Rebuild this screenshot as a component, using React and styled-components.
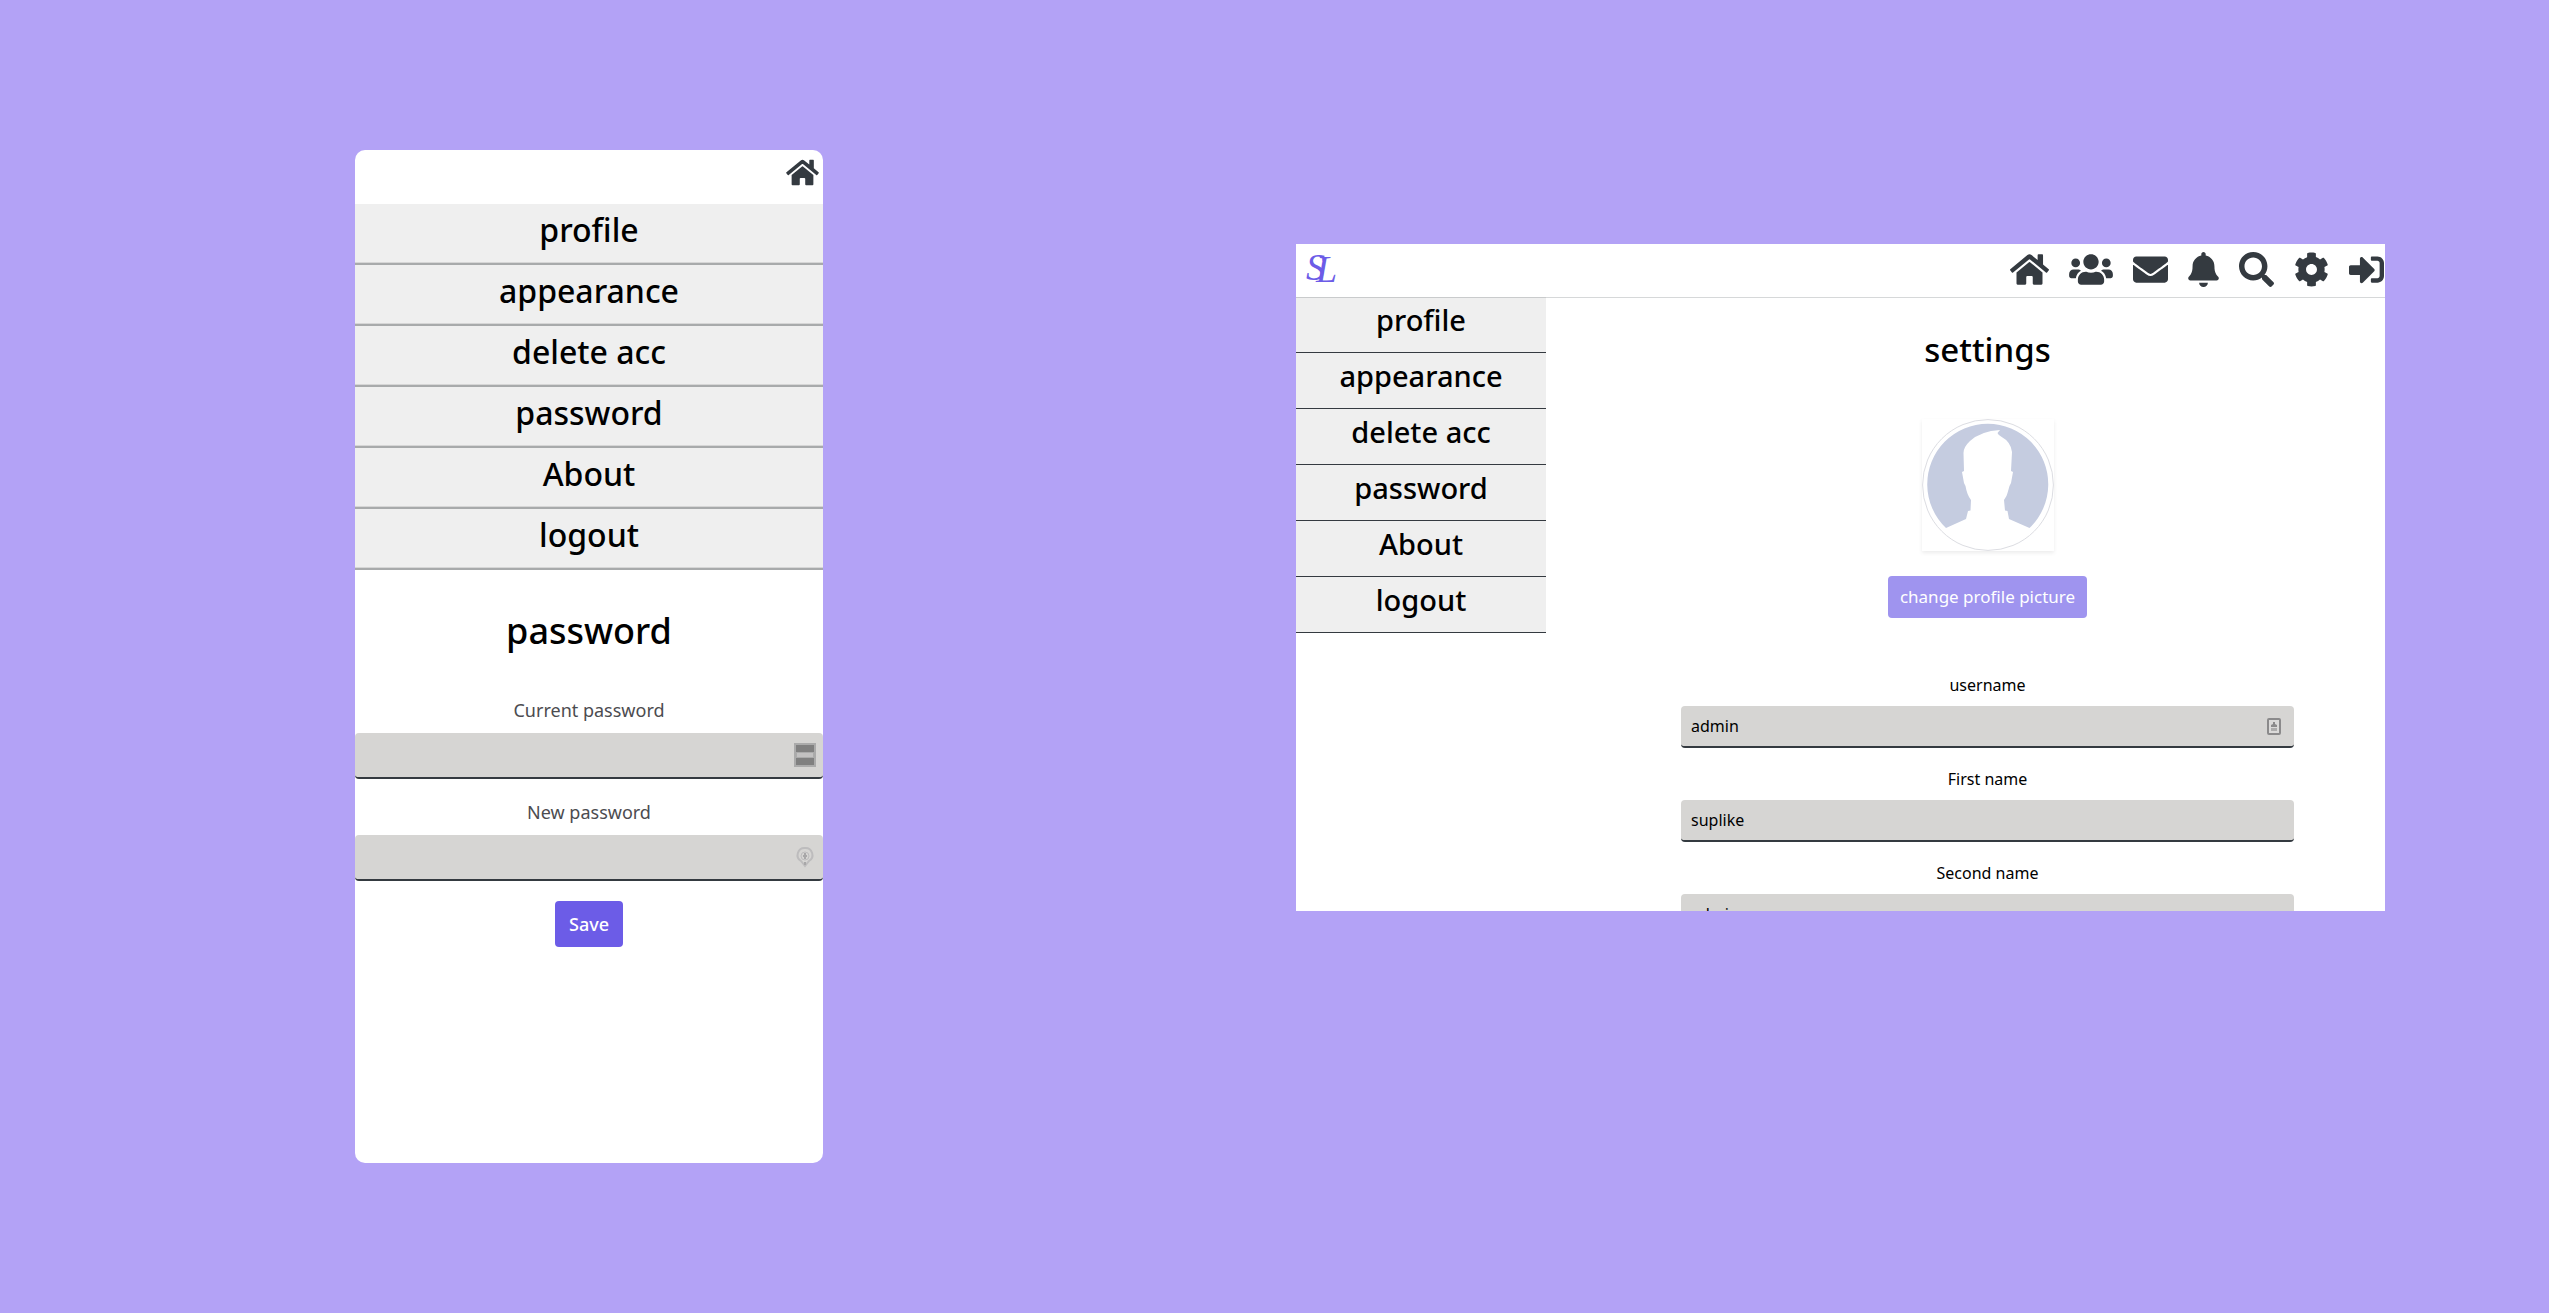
import React from "react";
import styled, { createGlobalStyle, css } from "styled-components";
import {
  FaHome,
  FaUsers,
  FaEnvelope,
  FaBell,
  FaSearch,
  FaCog,
  FaSignInAlt,
} from "react-icons/fa";

const GlobalStyle = createGlobalStyle`
  *, *::before, *::after { box-sizing: border-box; }
  body {
    margin: 0;
    background: #b3a2f6;
    color: #000;
    font-family: "Noto Sans", "Open Sans", sans-serif;
  }
  button, input { font: inherit; color: inherit; }
`;

const Page = styled.main`
  display: grid;
  grid-template-columns: 355fr 468fr 473fr 1089fr 164fr;
  align-items: start;
  min-height: 100vh;
  padding: 150px 0;
`;

const MobileScreen = styled.section`
  grid-column: 2;
  aspect-ratio: 468 / 1013;
  background: #fff;
  border-radius: 10px;
  overflow: hidden;
`;

const DesktopScreen = styled.section`
  grid-column: 4;
  aspect-ratio: 1089 / 667;
  margin-top: 94px;
  background: #fff;
  overflow: hidden;
`;

const MobileHeader = styled.header`
  display: flex;
  justify-content: flex-end;
  align-items: flex-start;
  height: 54px;
  padding: 8px 4px;
`;

const DesktopHeader = styled.header`
  position: relative;
  z-index: 1;
  display: flex;
  justify-content: space-between;
  align-items: flex-start;
  height: 53px;
  padding: 0 1px 0 8px;
  box-shadow: 0 1px 0 rgba(52, 58, 64, 0.2);
`;

const IconBar = styled.nav`
  display: flex;
  gap: 20px;
  padding-top: 8px;
`;

const IconLink = styled.a`
  display: block;
  color: #343a40;

  svg {
    display: block;
    width: ${(p) => p.$width}px;
    height: ${(p) => p.$height}px;
  }
`;

const LogoLink = styled.a`
  display: block;
  svg { display: block; }
`;

const Menu = styled.nav`
  display: flex;
  flex-direction: column;
  flex: none;
  width: ${(p) => (p.$mobile ? "100%" : "250px")};
`;

const MenuButton = styled.button`
  border: 0;
  border-bottom: 1px solid #343a40;
  background: #efefef;
  padding: 0 0 9px;
  font-size: 29px;
  font-weight: 500;
  line-height: 46px;
  text-align: center;

  ${(p) =>
    p.$mobile &&
    css`
      border-bottom: 2px solid #a8aaab;
      box-shadow: inset 0 -1px 0 #d6d6d6;
      padding: 0 0 7px;
      font-size: 32px;
      line-height: 52px;
    `}
`;

const Body = styled.div`
  display: flex;
  align-items: flex-start;
`;

const Content = styled.div`
  display: flex;
  flex-direction: column;
  align-items: center;
  flex: 1;
  padding: 33px 91px 0 135px;
`;

const Title = styled.h1`
  margin: 0;
  font-size: 33px;
  font-weight: 500;
  line-height: 40px;
  text-align: center;
`;

const AvatarFrame = styled.div`
  width: 132px;
  height: 132px;
  margin: 49px 0 25px;
  box-shadow: 0 2px 4px rgba(0, 0, 0, 0.08);
  svg { display: block; }
`;

const Button = styled.button`
  border: 0;
  border-radius: 4px;
  background: #6c5ce7;
  color: #fff;
  padding: 0 12px;
  font-size: 17px;
  line-height: 42px;

  &:disabled { opacity: 0.65; }
`;

const SaveButton = styled(Button)`
  align-self: center;
  padding: 0 14px;
  font-size: 18px;
  font-weight: 500;
  line-height: 46px;
`;

const Fields = styled.form`
  display: flex;
  flex-direction: column;
  gap: 19px;
  width: 100%;
  padding-top: 55px;
`;

const MobileForm = styled.form`
  display: flex;
  flex-direction: column;
  gap: 20px;
  padding-top: 41px;

  ${Title} {
    margin-bottom: 26px;
    font-size: 36px;
  }
`;

const FieldGroup = styled.div`
  display: flex;
  flex-direction: column;
  gap: ${(p) => (p.$mobile ? 10 : 9)}px;
  font-size: ${(p) => (p.$mobile ? 18 : 16)}px;
`;

const Label = styled.label`
  line-height: ${(p) => (p.$mobile ? 26 : 24)}px;
  color: ${(p) => (p.$mobile ? "#4c4c50" : "#000")};
  text-align: center;
`;

const InputWrap = styled.div`
  position: relative;
`;

const Input = styled.input`
  display: block;
  width: 100%;
  height: ${(p) => (p.$mobile ? 46 : 42)}px;
  border: 0;
  border-bottom: 2px solid #343a40;
  border-radius: 4px;
  background: #d6d5d3;
  padding: 0 40px 0 10px;
  outline: none;
`;

const InputBadge = styled.span`
  position: absolute;
  top: 0;
  bottom: 2px;
  right: ${(p) => (p.$mobile ? 7 : 13)}px;
  display: flex;
  align-items: center;
  pointer-events: none;
  svg { display: block; }
`;

const menuItems = ["profile", "appearance", "delete acc", "password", "About", "logout"];

const navItems = [
  ["Home", FaHome, 39],
  ["Friends", FaUsers, 44],
  ["Messages", FaEnvelope, 35],
  ["Notifications", FaBell, 31],
  ["Search", FaSearch, 35],
  ["Settings", FaCog, 35],
  ["Sign in", FaSignInAlt, 35],
];

function Logo() {
  return (
    <svg width="40" height="53" viewBox="0 0 40 53" fill="#6c5ce7" fontFamily="Liberation Serif, serif" fontStyle="italic">
      <text x="2 12" y="36 38" fontSize="38">SL</text>
    </svg>
  );
}

function Avatar() {
  return (
    <svg width="132" height="132" viewBox="0 0 132 132" role="img" aria-label="profile picture">
      <rect width="132" height="132" fill="#fff" />
      <circle cx="66" cy="66" r="65.4" fill="#fff" stroke="#dcdde2" strokeWidth="1" />
      <path
        d="M24 109 A60.5 60.5 0 1 1 107.5 109 L87 100 L85.500 92 L83 91.500 L82 81 Q85 77 85.500 74 L87.500 67 L89 64 L91 53 L89 52 L90 33 Q89 23 79 17.500 Q76 15.500 75.500 14 L78 11 Q59 12 48 22 Q41.500 28 41.500 34 L42 52 L40 53 L42 64 L43.500 67 Q45 76 49 81 L48.500 91.500 L46 92 L44 100 Z"
        fill="#c5cce0"
      />
    </svg>
  );
}

function ContactIcon() {
  return (
    <svg width="14" height="17" viewBox="0 0 14 17">
      <rect x="1" y="1" width="12" height="15" rx="1" fill="#dbdad9" stroke="#8b8a8b" strokeWidth="2" />
      <path d="M6 4h2v2l2 1v2H4V7l2-1z" fill="#8b8a8b" />
      <path d="M4 10h6v3H4z" fill="#adacac" />
    </svg>
  );
}

function PasswordIcon() {
  return (
    <svg width="22" height="24" viewBox="0 0 22 24">
      <path d="M0 0h22v24H0z" fill="#ababab" />
      <path d="M2 2h18v7H2zM2 15h18v7H2z" fill="#808080" />
      <path d="M3 10h16v4H3z" fill="#c2c1c1" />
    </svg>
  );
}

function KeyIcon() {
  return (
    <svg width="22" height="24" viewBox="0 0 22 24" fill="none" stroke="#bdbcbd">
      <path d="M11 3a7 7 0 0 0-4 13l4 5 4-5a7 7 0 0 0-4-13z" strokeWidth="2" />
      <circle cx="11" cy="11" r="4" strokeWidth="1" />
      <path d="M11 8v6M9 11h4M11 17v3" stroke="#a8a7a8" strokeWidth="2" />
    </svg>
  );
}

function SettingsMenu({ mobile }) {
  return (
    <Menu $mobile={mobile} aria-label="settings">
      {menuItems.map((item) => (
        <MenuButton key={item} type="button" $mobile={mobile}>
          {item}
        </MenuButton>
      ))}
    </Menu>
  );
}

function Field({ id, label, mobile, icon, ...input }) {
  return (
    <FieldGroup $mobile={mobile}>
      <Label htmlFor={id} $mobile={mobile}>{label}</Label>
      <InputWrap>
        <Input id={id} $mobile={mobile} {...input} />
        {icon && <InputBadge $mobile={mobile}>{icon}</InputBadge>}
      </InputWrap>
    </FieldGroup>
  );
}

export default function App() {
  return (
    <>
      <GlobalStyle />
      <Page>
        <MobileScreen>
          <MobileHeader>
            <IconLink href="#home" aria-label="Home" $width={33} $height={29}>
              <FaHome />
            </IconLink>
          </MobileHeader>
          <SettingsMenu mobile />
          <MobileForm>
            <Title>password</Title>
            <Field mobile id="current-password" label="Current password" type="password" icon={<PasswordIcon />} />
            <Field mobile id="new-password" label="New password" type="password" icon={<KeyIcon />} />
            <SaveButton type="button">Save</SaveButton>
          </MobileForm>
        </MobileScreen>

        <DesktopScreen>
          <DesktopHeader>
            <LogoLink href="#top" aria-label="SL">
              <Logo />
            </LogoLink>
            <IconBar>
              {navItems.map(([name, Icon, width]) => (
                <IconLink key={name} href={`#${name}`} aria-label={name} $width={width} $height={35}>
                  <Icon />
                </IconLink>
              ))}
            </IconBar>
          </DesktopHeader>
          <Body>
            <SettingsMenu />
            <Content>
              <Title>settings</Title>
              <AvatarFrame>
                <Avatar />
              </AvatarFrame>
              <Button type="button" disabled>change profile picture</Button>
              <Fields>
                <Field id="username" label="username" type="text" defaultValue="admin" icon={<ContactIcon />} />
                <Field id="first-name" label="First name" type="text" defaultValue="suplike" />
                <Field id="second-name" label="Second name" type="text" defaultValue="admin" />
              </Fields>
            </Content>
          </Body>
        </DesktopScreen>
      </Page>
    </>
  );
}
